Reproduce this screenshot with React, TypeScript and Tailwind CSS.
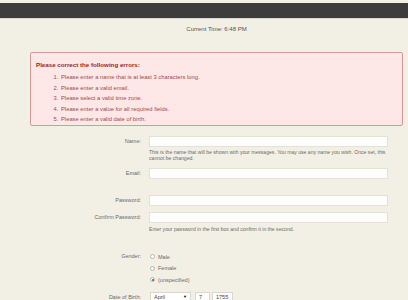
export default function App() {
  const errors = [
    "Please enter a name that is at least 3 characters long.",
    "Please enter a valid email.",
    "Please select a valid time zone.",
    "Please enter a value for all required fields.",
    "Please enter a valid date of birth.",
  ];

  const Row = ({ label, className = "" }: { label: string; className?: string }) => (
    <div className={"flex items-center " + className}>
      <div className="w-[142px] pr-[1px] text-right text-[5.5px] leading-[11px] text-[#6b6b6b]">{label}</div>
      <div className="ml-[7px] h-[11px] w-[239px] border border-[#e3e1d8] bg-[#fdfdfb]" />
    </div>
  );

  const Radio = ({ label, checked }: { label: string; checked?: boolean }) => (
    <div className="flex items-center h-[11.5px]">
      <span className="flex h-[5px] w-[5px] items-center justify-center rounded-full border border-[#b5b5b5] bg-white">
        {checked && <span className="h-[2px] w-[2px] rounded-full bg-[#555]" />}
      </span>
      <span className="ml-[3px] text-[5.5px] text-[#6b6b6b]">{label}</span>
    </div>
  );

  return (
    <div
      className="h-[300px] w-[408px] overflow-hidden bg-[#f2efe4]"
      style={{ fontFamily: '"Liberation Sans", Arial, sans-serif' }}
    >
      <div className="h-[3px]" />
      <div className="h-[15px] bg-[#3c3c3c]" />
      <div className="h-[1px] bg-[#d6d4cc]" />

      <div className="pt-[6px] text-center text-[6px] leading-[8px] text-[#555] pl-[25px]">
        Current Time: 6:48 PM
      </div>

      {/* errors */}
      <div className="ml-[30px] mr-[5px] mt-[19px] h-[74px] rounded-[2px] border border-[#d49a9a] bg-[#fde7e7] px-[5px] pt-[8px]">
        <div className="text-[6.2px] font-bold leading-[8px] text-[#9b1f1f]">
          Please correct the following errors:
        </div>
        <ol className="mt-[3px] list-decimal pl-[24px] text-[5.8px] leading-[10.5px] text-[#a84848]">
          {errors.map((e) => (
            <li key={e} className="pl-[1px]">{e}</li>
          ))}
        </ol>
      </div>

      {/* form */}
      <Row label="Name:" className="mt-[10px]" />
      <div className="ml-[149px] mt-[2px] w-[242px] text-[5.1px] leading-[6px] text-[#6b6b6b]">
        This is the name that will be shown with your messages. You may use any name you wish. Once set, this cannot be changed.
      </div>
      <Row label="Email:" className="mt-[7px]" />
      <Row label="Password:" className="mt-[16px]" />
      <Row label="Confirm Password:" className="mt-[6px]" />
      <div className="ml-[149px] mt-[3px] text-[5.1px] leading-[6px] text-[#6b6b6b]">
        Enter your password in the first box and confirm it in the second.
      </div>

      <div className="mt-[19px] flex">
        <div className="w-[142px] pr-[1px] text-right text-[5.5px] leading-[11.5px] text-[#6b6b6b]">Gender:</div>
        <div className="ml-[8px] flex flex-col">
          <Radio label="Male" />
          <Radio label="Female" />
          <Radio label="(unspecified)" checked />
        </div>
      </div>

      <div className="mt-[6px] flex items-center">
        <div className="w-[142px] pr-[1px] text-right text-[5.5px] leading-[11px] text-[#6b6b6b]">Date of Birth:</div>
        <div className="ml-[8px] flex h-[11px] w-[41px] items-center justify-between border border-[#d9d7ce] bg-white px-[3px] text-[5.5px] text-[#444]">
          <span>April</span>
          <span className="text-[4px] text-black">▼</span>
        </div>
        <div className="ml-[4px] flex h-[11px] w-[15px] items-center border border-[#d9d7ce] bg-white px-[3px] text-[5.5px] text-[#444]">7</div>
        <div className="ml-[2px] flex h-[11px] w-[21px] items-center border border-[#d9d7ce] bg-white px-[3px] text-[5.5px] text-[#444]">1755</div>
      </div>
    </div>
  );
}
